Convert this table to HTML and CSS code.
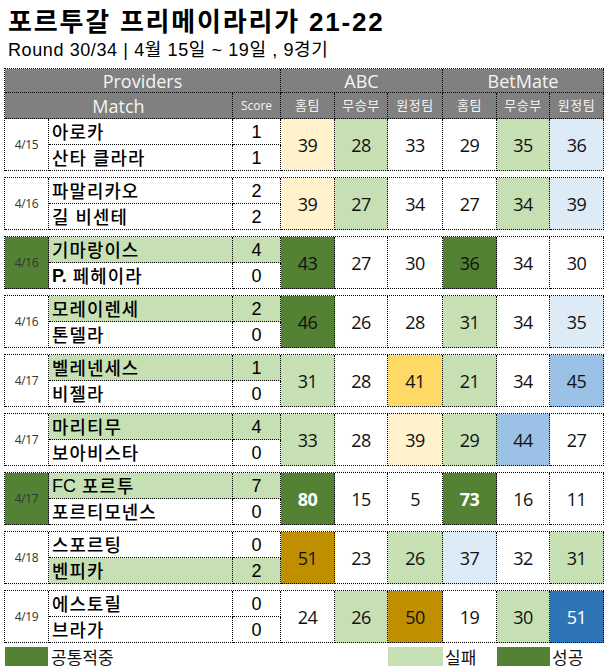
FILE: index.html
```html
<!DOCTYPE html>
<html lang="ko">
<head>
<meta charset="utf-8">
<title>포르투갈 프리메이라리가 21-22</title>
<link rel="stylesheet" href="styles.css">
</head>
<body>
<div class="page">
  <h1 class="title">포르투갈 프리메이라리가 21-22</h1>
  <p class="subtitle">Round 30/34 | 4월 15일 ~ 19일 , 9경기</p>

  <div class="head">
    <div class="h h-span3 h-big">Providers</div>
    <div class="h h-span3 h-big">ABC</div>
    <div class="h h-span3 h-big">BetMate</div>
    <div class="h h-span2 h-big">Match</div>
    <div class="h h-score">Score</div>
    <div class="h h-sub">홈팀</div>
    <div class="h h-sub">무승부</div>
    <div class="h h-sub">원정팀</div>
    <div class="h h-sub">홈팀</div>
    <div class="h h-sub">무승부</div>
    <div class="h h-sub">원정팀</div>
  </div>

  <div class="match first">
    <div class="date">4/15</div>
    <div class="team">아로카</div>
    <div class="score">1</div>
    <div class="p c-ly">39</div><div class="p c-lg">28</div><div class="p">33</div>
    <div class="p">29</div><div class="p c-lg">35</div><div class="p c-lb">36</div>
    <div class="team">산타 클라라</div>
    <div class="score">1</div>
  </div>

  <div class="match">
    <div class="date">4/16</div>
    <div class="team">파말리카오</div>
    <div class="score">2</div>
    <div class="p c-ly">39</div><div class="p c-lg">27</div><div class="p">34</div>
    <div class="p">27</div><div class="p c-lg">34</div><div class="p c-lb">39</div>
    <div class="team">길 비센테</div>
    <div class="score">2</div>
  </div>

  <div class="match">
    <div class="date c-dg">4/16</div>
    <div class="team c-lg">기마랑이스</div>
    <div class="score c-lg">4</div>
    <div class="p c-dg">43</div><div class="p">27</div><div class="p">30</div>
    <div class="p c-dg">36</div><div class="p">34</div><div class="p">30</div>
    <div class="team"><b class="latin">P.</b>&nbsp;페헤이라</div>
    <div class="score">0</div>
  </div>

  <div class="match">
    <div class="date">4/16</div>
    <div class="team c-lg">모레이렌세</div>
    <div class="score c-lg">2</div>
    <div class="p c-dg">46</div><div class="p">26</div><div class="p">28</div>
    <div class="p c-lg">31</div><div class="p">34</div><div class="p c-lb">35</div>
    <div class="team">톤델라</div>
    <div class="score">0</div>
  </div>

  <div class="match">
    <div class="date">4/17</div>
    <div class="team c-lg">벨레넨세스</div>
    <div class="score c-lg">1</div>
    <div class="p c-lg">31</div><div class="p">28</div><div class="p c-gy">41</div>
    <div class="p c-lg">21</div><div class="p">34</div><div class="p c-mb">45</div>
    <div class="team">비젤라</div>
    <div class="score">0</div>
  </div>

  <div class="match">
    <div class="date">4/17</div>
    <div class="team c-lg">마리티무</div>
    <div class="score c-lg">4</div>
    <div class="p c-lg">33</div><div class="p">28</div><div class="p c-ly">39</div>
    <div class="p c-lg">29</div><div class="p c-mb">44</div><div class="p">27</div>
    <div class="team">보아비스타</div>
    <div class="score">0</div>
  </div>

  <div class="match">
    <div class="date c-dg">4/17</div>
    <div class="team c-lg"><span class="latin">FC</span>&nbsp;포르투</div>
    <div class="score c-lg">7</div>
    <div class="p c-dg strong">80</div><div class="p">15</div><div class="p">5</div>
    <div class="p c-dg strong">73</div><div class="p">16</div><div class="p">11</div>
    <div class="team">포르티모넨스</div>
    <div class="score">0</div>
  </div>

  <div class="match">
    <div class="date">4/18</div>
    <div class="team">스포르팅</div>
    <div class="score">0</div>
    <div class="p c-dy">51</div><div class="p">23</div><div class="p c-lg">26</div>
    <div class="p c-lb">37</div><div class="p">32</div><div class="p c-lg">31</div>
    <div class="team c-lg">벤피카</div>
    <div class="score c-lg">2</div>
  </div>

  <div class="match">
    <div class="date">4/19</div>
    <div class="team">에스토릴</div>
    <div class="score">0</div>
    <div class="p">24</div><div class="p c-lg">26</div><div class="p c-dy">50</div>
    <div class="p">19</div><div class="p c-lg">30</div><div class="p c-db">51</div>
    <div class="team">브라가</div>
    <div class="score">0</div>
  </div>

  <div class="legend">
    <div class="swatch c-dg col1"></div>
    <div class="label col2">공통적중</div>
    <div class="swatch c-lg col6"></div>
    <div class="label col7">실패</div>
    <div class="swatch c-dg col8"></div>
    <div class="label col9">성공</div>
  </div>
</div>
</body>
</html>
```

FILE: styles.css
```css
* { box-sizing: border-box; }

html, body {
  margin: 0;
  padding: 0;
  background: #ffffff;
}

body {
  font-family: "Noto Sans CJK KR", "Noto Sans", sans-serif;
  color: #000000;
}

.page {
  padding: 0 4px;
}

.title {
  margin: 0;
  padding: 6px 0 0 4px;
  font-family: "Liberation Sans", "Noto Sans CJK KR", sans-serif;
  font-size: 26px;
  font-weight: bold;
  line-height: 32px;
  letter-spacing: 1.8px;
}

.subtitle {
  margin: 0 0 6px 0;
  padding-left: 4px;
  font-family: "Liberation Sans", "Noto Sans CJK KR", sans-serif;
  font-size: 18px;
  line-height: 24px;
  letter-spacing: 0.6px;
}

.head,
.match,
.legend {
  display: grid;
  grid-template-columns: 44px 184px 48px 54px 53px 55px 54px 53px 54px;
  width: 600px;
}

.head,
.match {
  border-top: 1px dotted #000;
  border-left: 1px dotted #000;
}

.head {
  grid-template-rows: 24px 26px;
}

.match {
  grid-template-rows: 26px 26px;
  margin-top: 6px;
}

.match.first {
  margin-top: -1px;
}

.head > div,
.match > div {
  border-right: 1px dotted #000;
  border-bottom: 1px dotted #000;
  display: flex;
  align-items: center;
  justify-content: center;
  line-height: 1;
  white-space: nowrap;
}

.h {
  background: #808080;
  color: #f4f4f4;
  font-family: "Open Sans", "Noto Sans CJK KR", sans-serif;
}

.h-span3 { grid-column: span 3; }
.h-span2 { grid-column: span 2; }

.h-big {
  font-size: 18px;
}

.h-score {
  font-size: 12px;
}

.h-sub {
  font-size: 13px;
  letter-spacing: 0.5px;
}

.date {
  grid-row: span 2;
  font-family: "Open Sans", "Noto Sans", sans-serif;
  font-size: 12px;
  color: #333333;
  letter-spacing: -0.4px;
}

.match > .team {
  justify-content: flex-start;
  padding-left: 3px;
  padding-top: 1px;
  font-size: 17.8px;
  font-weight: 500;
  letter-spacing: 1.1px;
  color: #000;
}

.latin {
  font-family: "Liberation Sans", sans-serif;
  font-size: 18px;
  font-weight: normal;
  letter-spacing: 0;
}

b.latin {
  font-weight: bold;
}

.score {
  font-family: "Liberation Sans", sans-serif;
  font-size: 18px;
  padding-top: 1px;
}

.p {
  grid-row: span 2;
  font-family: "Open Sans", "Noto Sans", sans-serif;
  font-size: 18px;
  letter-spacing: -0.6px;
  color: #111111;
}

.strong {
  color: #ffffff !important;
  font-weight: bold;
}

.c-ly { background: #fff2cc; }
.c-lg { background: #c6e0b4; }
.c-lb { background: #ddebf7; }
.c-mb { background: #9bc2e6; }
.c-gy { background: #ffd966; }
.c-dg { background: #548235; }
.c-dy { background: #bf8f00; }
.c-db { background: #2e75b6; color: #ffffff !important; }

.legend {
  margin-top: 4px;
  padding-left: 1px;
  height: 20px;
}

.legend .swatch {
  height: 19px;
}

.legend .col1 { grid-column: 1; width: 43px; }
.legend .col2 { grid-column: 2; }
.legend .col6 { grid-column: 6; }
.legend .col7 { grid-column: 7; }
.legend .col8 { grid-column: 8; }
.legend .col9 { grid-column: 9; }

.legend .label {
  font-size: 17px;
  line-height: 19px;
  padding-left: 2px;
  color: #111111;
}
```
